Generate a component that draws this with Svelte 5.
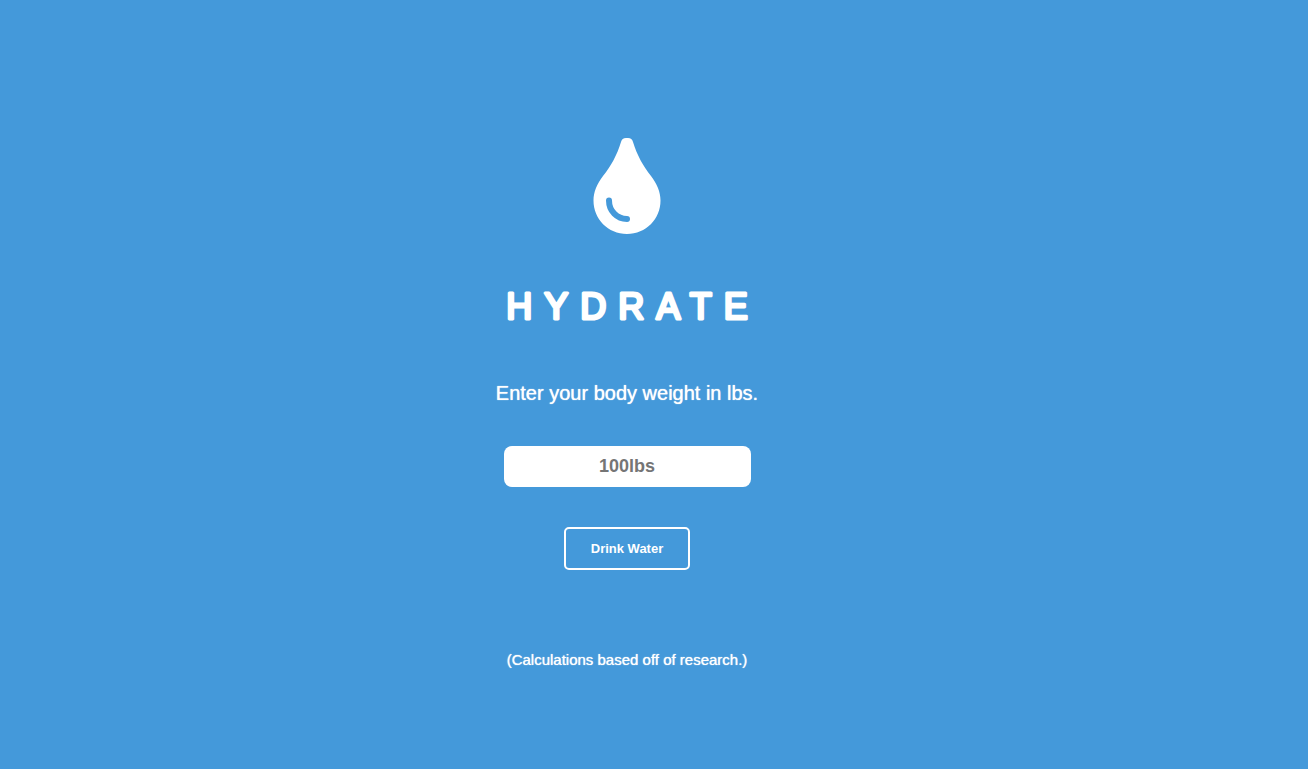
<script>
  let weight = $state('');
</script>

<main>
  <svg class="drop" viewBox="0 0 68 96" aria-hidden="true">
    <path
      class="body"
      d="M33 0H35Q39 0 40 4C44 17 50 28 58 38C64 46 67.5 54 67.5 62.5C67.5 81 53 96 34 96C15 96 .5 81 .5 62.5C.5 54 4 46 10 38C18 28 24 17 28 4Q29 0 33 0Z"
    />
    <path class="shine" d="M16 62.5C16 73 24 81 34 81" />
  </svg>

  <h1>
    <svg class="title">
      <text x="50%" y="34">HYDRATE</text>
    </svg>
  </h1>

  <form onsubmit={(event) => event.preventDefault()}>
    <label for="weight">Enter your body weight in lbs.</label>
    <input id="weight" type="text" placeholder="100lbs" bind:value={weight} />
    <button type="submit">Drink Water</button>
  </form>

  <p>(Calculations based off of research.)</p>
</main>

<style>
  :global(body) {
    margin: 0;
    background: #4499da;
  }

  main {
    box-sizing: border-box;
    min-height: 100vh;
    padding: 138px 54px 40px 0;
    display: flex;
    flex-direction: column;
    align-items: center;
    color: #fff;
    font-family: "Liberation Sans", Arial, sans-serif;
    text-align: center;
  }

  .drop {
    width: 68px;
    height: 96px;
  }

  .body {
    fill: #fff;
  }

  .shine {
    fill: none;
    stroke: #4499da;
    stroke-width: 6;
    stroke-linecap: round;
  }

  /* The left padding balances the letter spacing after the last letter. */
  h1 {
    box-sizing: border-box;
    width: 100%;
    margin: 51px 0 0;
    padding-left: 12px;
    font-size: 36px;
    font-weight: 400;
    line-height: 1;
  }

  .title {
    display: block;
    width: 100%;
    height: 44px;
  }

  .title text {
    fill: #fff;
    stroke: #fff;
    stroke-width: 3;
    stroke-linejoin: round;
    letter-spacing: 12px;
    text-anchor: middle;
  }

  form {
    display: flex;
    flex-direction: column;
    align-items: center;
    margin-top: 52px;
  }

  label {
    font-size: 20px;
    line-height: 24px;
    text-shadow: 0 0 1px #fff;
  }

  input {
    box-sizing: border-box;
    width: 247px;
    height: 41px;
    margin: 41px 0 40px;
    padding: 0 12px;
    border: 0;
    border-radius: 8px;
    background: #fff;
    color: #757575;
    font: bold 18px "Liberation Sans", Arial, sans-serif;
    text-align: center;
  }

  input::placeholder {
    color: #757575;
  }

  button {
    padding: 10px 25px;
    border: 2px solid #fff;
    border-radius: 5px;
    background: transparent;
    color: #fff;
    font: bold 13px/19px "Liberation Sans", Arial, sans-serif;
    cursor: pointer;
  }

  p {
    margin: 80px 0 0;
    font-size: 15px;
    line-height: 20px;
    text-shadow: 0 0 1px #fff;
  }
</style>
